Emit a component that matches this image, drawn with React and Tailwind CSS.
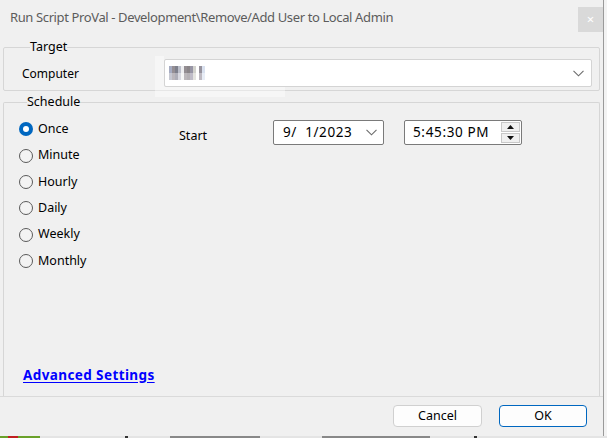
import React from "react";

const font = { fontFamily: '"Noto Sans", "Segoe UI", sans-serif' };

function Radio({ label, checked }) {
  return (
    <div className="flex items-center h-[26.4px]">
      {checked ? (
        <span className="w-[14px] h-[14px] rounded-full bg-[#0067c0] flex items-center justify-center">
          <span className="w-[6px] h-[6px] rounded-full bg-white" />
        </span>
      ) : (
        <span className="w-[14px] h-[14px] rounded-full border border-[#5a5a5a] bg-[#f3f3f3]" />
      )}
      <span className="ml-[5px] text-[12.5px] text-black">{label}</span>
    </div>
  );
}

function Chevron() {
  return (
    <svg width="11" height="7" viewBox="0 0 11 7" fill="none">
      <path d="M0.5 0.8 L5.5 5.8 L10.5 0.8" stroke="#6b6b6b" strokeWidth="1.1" />
    </svg>
  );
}

const px = [
  ["#a6acc2", "#958f94", "#7e808c", "#bcbfca", "#eeeef0", "#948e92", "#8a8588", "#9795a5", "#d2d2cd", "#ffffff", "#96929c", "#d9e1ef"],
  ["#c6c8d2", "#bbb7bc", "#aeaeb8", "#d8d9e0", "#f6f6f6", "#bcb8bb", "#b5b1b5", "#bfbcc8", "#e4e4e0", "#ffffff", "#bdb9c1", "#e8edf6"],
];

export default function App() {
  return (
    <div className="w-[607px] h-[438px] bg-[#f0f0f0] relative overflow-hidden" style={font}>
      <div className="flex h-[436px]">
        <div className="w-[604px] h-[436px] bg-[#f0f0f0] border-r border-[#9a9a9a] rounded-bl-[7px] flex flex-col">
          {/* title bar */}
          <div className="h-[39px] flex items-start justify-between">
            <div className="pl-[10px] pt-[8px] text-[13px] text-[#5c5c5c] tracking-[-0.38px]">
              Run Script ProVal - Development\Remove/Add User to Local Admin
            </div>
            <div className="mt-[7px] w-[25px] h-[25px] bg-[#d9d9d9] flex items-center justify-center text-white text-[13px]">
              ×
            </div>
          </div>

          {/* Target */}
          <fieldset className="mx-[3px] border border-[#d6d6d6] rounded-[2px] pl-[18px] pr-[7px] pt-[4px] pb-[3px]">
            <legend className="ml-[8px] text-[12.5px] leading-[16px] text-black">Target</legend>
            <div className="flex items-center">
              <span className="w-[142px] text-[12px] text-black pt-[2px]">Computer</span>
              <div className="flex-1 h-[28px] bg-white border border-[#d4d4d4] rounded-[2px] flex items-center justify-between pl-[4px] pr-[7px]">
                <div className="flex flex-col">
                  {px.map((row, i) => (
                    <div key={i} className="flex">
                      {row.map((c, j) => (
                        <span key={j} className="w-[3px] h-[7px]" style={{ backgroundColor: c }} />
                      ))}
                    </div>
                  ))}
                </div>
                <Chevron />
              </div>
            </div>
          </fieldset>

          {/* Schedule */}
          <fieldset className="mx-[3px] mt-[3px] border border-b-0 border-[#d6d6d6] rounded-t-[2px] flex-1 flex flex-col pl-[15px] pr-[7px]">
            <legend className="ml-[8px] text-[12.5px] leading-[16px] text-black">Schedule</legend>
            <div className="flex pt-[6px]">
              <div className="flex flex-col w-[160px]">
                <Radio label="Once" checked />
                <Radio label="Minute" />
                <Radio label="Hourly" />
                <Radio label="Daily" />
                <Radio label="Weekly" />
                <Radio label="Monthly" />
              </div>
              <div className="flex items-center h-[25px] mt-[4px]">
                <span className="w-[94px] text-[12.5px] text-black pt-[8px]">Start</span>
                <div className="w-[111px] h-[25px] bg-white border border-[#7a7a7a] rounded-[2px] flex items-center justify-between pl-[9px] pr-[6px]">
                  <span className="text-[13.5px] tracking-[0.6px] text-black whitespace-pre">9/  1/2023</span>
                  <Chevron />
                </div>
                <div className="ml-[20px] w-[118px] h-[25px] bg-white border border-[#7a7a7a] rounded-[2px] flex items-center justify-between pl-[8px] pr-[1px]">
                  <span className="text-[13.5px] tracking-[0.65px] text-black">5:45:30 PM</span>
                  <div className="flex flex-col gap-[1px]">
                    <div className="w-[19px] h-[10px] bg-[#f0f0f0] border border-[#c8c8c8] flex items-center justify-center">
                      <svg width="7" height="4" viewBox="0 0 7 4"><path d="M0 4 L3.5 0 L7 4 Z" fill="#111" /></svg>
                    </div>
                    <div className="w-[19px] h-[10px] bg-[#f0f0f0] border border-[#c8c8c8] flex items-center justify-center">
                      <svg width="7" height="4" viewBox="0 0 7 4"><path d="M0 0 L3.5 4 L7 0 Z" fill="#111" /></svg>
                    </div>
                  </div>
                </div>
              </div>
            </div>
            <div className="flex-1" />
            <div className="pl-[4px] pb-[10px]">
              <span className="text-[13.5px] tracking-[0.4px] font-bold text-[#0000ff] underline underline-offset-[2px]">Advanced Settings</span>
            </div>
          </fieldset>
          <div className="h-px bg-[#dadada]" />

          {/* buttons */}
          <div className="h-[39px] flex items-start justify-end gap-[17px] pr-[16px] pt-[8px]">
            <button className="w-[89px] h-[22px] bg-[#fdfdfd] border border-[#d0d0d0] rounded-[4px] text-[12.5px] text-black leading-none">
              Cancel
            </button>
            <button className="w-[88px] h-[22px] bg-[#fdfdfd] border border-[#0067c0] rounded-[4px] text-[12.5px] text-black leading-none">
              OK
            </button>
          </div>
        </div>
        <div className="flex-1 bg-[#f3f3f3]" />
      </div>
      {/* backdrop strip below window */}
      <div className="h-[2px] flex">
        <div className="w-[8px] bg-[#6aa12a]" />
        <div className="w-[10px] bg-[#c02020]" />
        <div className="w-[22px] bg-[#6aa12a]" />
        <div className="w-[85px] bg-[#e4e4e4]" />
        <div className="w-[3px] bg-[#333]" />
        <div className="w-[42px] bg-[#e4e4e4]" />
        <div className="w-[90px] bg-[#888]" />
        <div className="w-[62px] bg-[#e4e4e4]" />
        <div className="w-[108px] bg-[#888]" />
        <div className="w-[44px] bg-[#e4e4e4]" />
        <div className="w-[3px] bg-[#333]" />
        <div className="flex-1 bg-[#e4e4e4]" />
      </div>
      {/* blur artifact overlay below the combo */}
      <div className="absolute left-[155px] top-[87px] w-[130px] h-[10px] bg-white/40 pointer-events-none" />
      <div className="absolute left-[155px] top-[56px] w-[9px] h-[31px] bg-white/40 pointer-events-none" />
    </div>
  );
}
